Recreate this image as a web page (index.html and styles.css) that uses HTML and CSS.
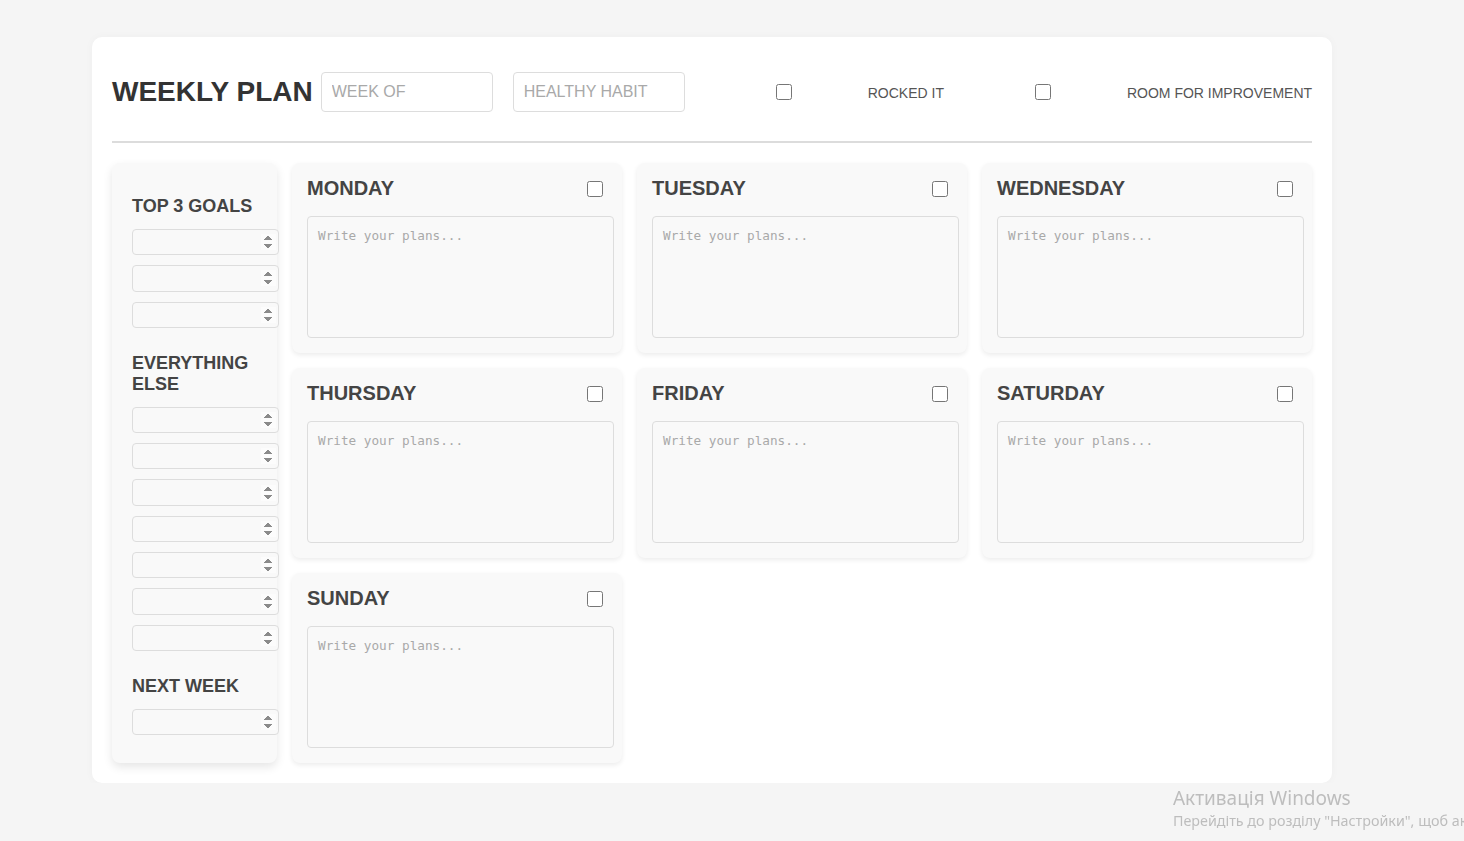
FILE: index.html
```html
<!DOCTYPE html>
<html lang="en">
<head>
<meta charset="utf-8">
<title>Weekly Plan</title>
<link rel="stylesheet" href="styles.css">
</head>
<body>
<div class="page">
  <header class="header">
    <h1 class="title">WEEKLY PLAN</h1>
    <input class="top-input" type="text" placeholder="WEEK OF">
    <input class="top-input habit" type="text" placeholder="HEALTHY HABIT">
    <input class="check top-check" type="checkbox">
    <span class="top-label">ROCKED IT</span>
    <input class="check top-check" type="checkbox">
    <span class="top-label">ROOM FOR IMPROVEMENT</span>
  </header>

  <main class="grid">
    <aside class="sidebar">
      <h3 class="side-title">TOP 3 GOALS</h3>
      <input class="side-input" type="number">
      <input class="side-input" type="number">
      <input class="side-input" type="number">
      <h3 class="side-title">EVERYTHING ELSE</h3>
      <input class="side-input" type="number">
      <input class="side-input" type="number">
      <input class="side-input" type="number">
      <input class="side-input" type="number">
      <input class="side-input" type="number">
      <input class="side-input" type="number">
      <input class="side-input" type="number">
      <h3 class="side-title">NEXT WEEK</h3>
      <input class="side-input" type="number">
    </aside>

    <section class="day">
      <div class="day-head"><h2 class="day-name">MONDAY</h2><input class="check" type="checkbox"></div>
      <textarea class="plans" placeholder="Write your plans..."></textarea>
    </section>
    <section class="day">
      <div class="day-head"><h2 class="day-name">TUESDAY</h2><input class="check" type="checkbox"></div>
      <textarea class="plans" placeholder="Write your plans..."></textarea>
    </section>
    <section class="day">
      <div class="day-head"><h2 class="day-name">WEDNESDAY</h2><input class="check" type="checkbox"></div>
      <textarea class="plans" placeholder="Write your plans..."></textarea>
    </section>
    <section class="day">
      <div class="day-head"><h2 class="day-name">THURSDAY</h2><input class="check" type="checkbox"></div>
      <textarea class="plans" placeholder="Write your plans..."></textarea>
    </section>
    <section class="day">
      <div class="day-head"><h2 class="day-name">FRIDAY</h2><input class="check" type="checkbox"></div>
      <textarea class="plans" placeholder="Write your plans..."></textarea>
    </section>
    <section class="day">
      <div class="day-head"><h2 class="day-name">SATURDAY</h2><input class="check" type="checkbox"></div>
      <textarea class="plans" placeholder="Write your plans..."></textarea>
    </section>
    <section class="day">
      <div class="day-head"><h2 class="day-name">SUNDAY</h2><input class="check" type="checkbox"></div>
      <textarea class="plans" placeholder="Write your plans..."></textarea>
    </section>
  </main>
</div>

<div class="activation">
  <div class="act-title">Активація Windows</div>
  <div class="act-sub">Перейдіть до розділу "Настройки", щоб активувати Windows.</div>
</div>
</body>
</html>
```

FILE: styles.css
```css
html, body {
  margin: 0;
  padding: 0;
  background: #f5f5f5;
  font-family: "Liberation Sans", Arial, sans-serif;
  color: #333;
  overflow: hidden;
}

.page {
  width: 1200px;
  margin: 37px 0 0 92px;
  padding: 20px;
  background: #fff;
  border-radius: 10px;
  box-shadow: 0 0 10px rgba(0, 0, 0, 0.03);
}

.header {
  display: flex;
  align-items: center;
  margin-top: 15px;
  padding-bottom: 29px;
  border-bottom: 2px solid #dcdcdc;
}

.header > * {
  flex: none;
  white-space: nowrap;
}

.title {
  margin: 0 8px 0 0;
  font-size: 28px;
  font-weight: bold;
  color: #333;
}

.top-input {
  box-sizing: border-box;
  width: 172px;
  height: 40px;
  padding: 0 10px;
  border: 1px solid #ddd;
  border-radius: 4px;
  background: #fff;
  font-family: "Liberation Sans", Arial, sans-serif;
  font-size: 16px;
  color: #333;
  outline: none;
}

.top-input::placeholder {
  color: #a9a9a9;
}

.habit {
  margin-left: 20px;
}

.check {
  width: 16px;
  height: 16px;
  margin: 0;
  flex: none;
}

.top-check {
  margin-left: 91px;
}

.top-label {
  margin-left: 76px;
  padding-top: 2px;
  font-size: 14px;
  color: #555;
}

.grid {
  display: grid;
  grid-template-columns: 165px repeat(3, 1fr);
  grid-template-rows: repeat(3, 190px);
  gap: 15px;
  margin-top: 20px;
}

.sidebar {
  grid-row: 1 / span 3;
  box-sizing: border-box;
  padding: 18px 20px 20px 20px;
  background: #f9f9f9;
  border-radius: 8px;
  box-shadow: 0 4px 10px rgba(0, 0, 0, 0.1);
}

.side-title {
  margin: 15px 0 12px 0;
  font-size: 18px;
  font-weight: bold;
  color: #444;
}

.side-input + .side-title {
  margin-top: 25px;
}

.side-input {
  display: block;
  width: calc(100% + 8px);
  box-sizing: content-box;
  height: 24.3px;
  padding: 0 2px 0 10px;
  margin: 0 0 10px 0;
  border: 1px solid #ddd;
  border-radius: 4px;
  background: #f9f9f9;
  font-size: 14px;
  outline: none;
}

.side-input::-webkit-inner-spin-button {
  opacity: 1;
}

.day {
  box-sizing: border-box;
  padding: 14px 8px 15px 15px;
  background: #f9f9f9;
  border-radius: 8px;
  box-shadow: 0 2px 5px rgba(0, 0, 0, 0.08);
  display: flex;
  flex-direction: column;
}

.day-head {
  display: flex;
  align-items: center;
  justify-content: space-between;
  padding-right: 11px;
  margin-bottom: 16px;
}

.day-name {
  margin: 0;
  font-size: 20px;
  font-weight: bold;
  color: #444;
}

.plans {
  box-sizing: border-box;
  width: 100%;
  height: 122px;
  padding: 11px 10px 10px 10px;
  border: 1px solid #ddd;
  border-radius: 4px;
  background: #f9f9f9;
  font-family: "DejaVu Sans Mono", "Liberation Mono", monospace;
  font-size: 12.7px;
  resize: none;
  outline: none;
}

.plans::placeholder {
  color: #a9a9a9;
}

.activation {
  position: fixed;
  left: 1173px;
  top: 785px;
  white-space: nowrap;
  font-family: "Noto Sans", "Open Sans", sans-serif;
  color: #bdbdbd;
}

.act-title {
  font-size: 19px;
  line-height: 26px;
}

.act-sub {
  font-size: 14.3px;
  line-height: 20px;
}
```
